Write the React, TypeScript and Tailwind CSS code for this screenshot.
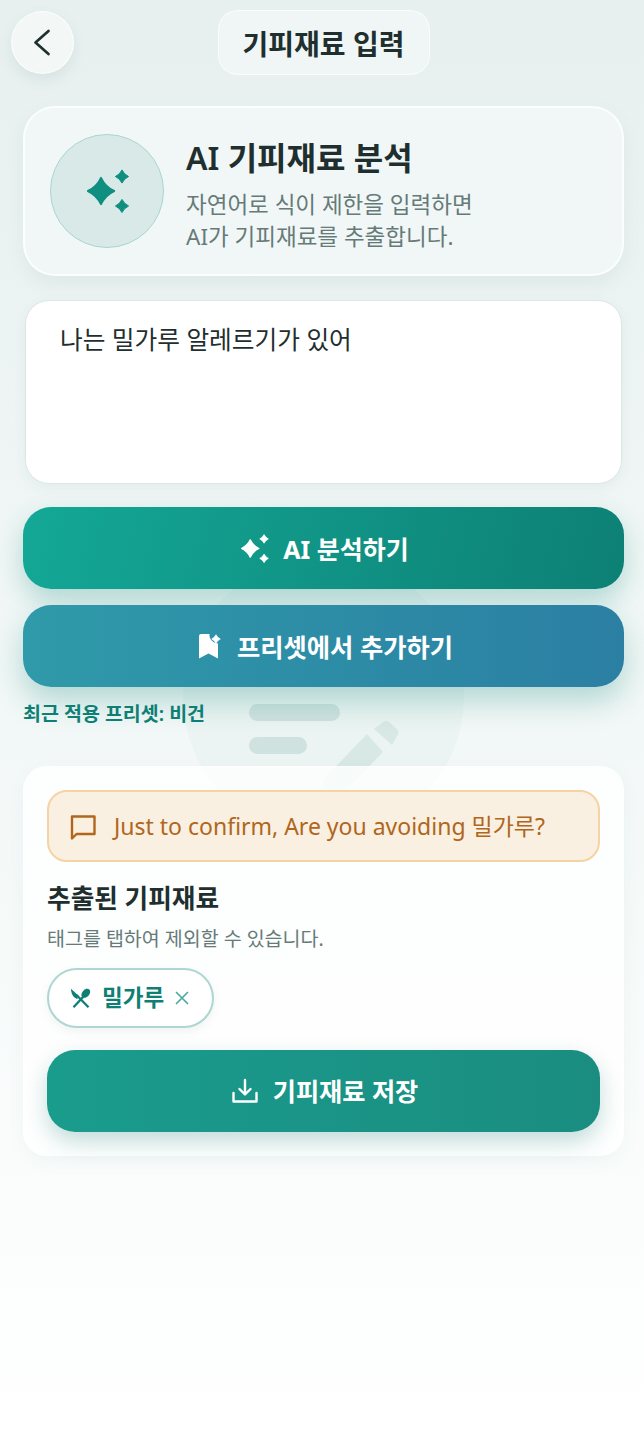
import React from "react";

function Star({ cx, cy, r, fill = "currentColor" }: { cx: number; cy: number; r: number; fill?: string }) {
  const k = r * 0.3;
  return (
    <path
      fill={fill}
      stroke={fill}
      strokeWidth={r * 0.14}
      strokeLinejoin="round"
      d={`M${cx} ${cy - r * 0.94}Q${cx + k} ${cy - k} ${cx + r * 0.94} ${cy}Q${cx + k} ${cy + k} ${cx} ${cy + r * 0.94}Q${cx - k} ${cy + k} ${cx - r * 0.94} ${cy}Q${cx - k} ${cy - k} ${cx} ${cy - r * 0.94}Z`}
    />
  );
}

function Sparkles({ className }: { className?: string }) {
  return (
    <svg viewBox="0 0 44 44" className={className}>
      <Star cx={14} cy={22} r={14} />
      <Star cx={35} cy={7.5} r={7} />
      <Star cx={35} cy={37} r={7} />
    </svg>
  );
}

function BookmarkPlus({ className }: { className?: string }) {
  return (
    <svg viewBox="0 0 22 25" className={className}>
      <path fill="currentColor" d="M0 2Q0 0 2 0H10.500C10 4 12.500 8.500 19 9.500V24.500L9.500 19.500 0 24.500Z" />
      <Star cx={17} cy={5} r={4.600} />
    </svg>
  );
}

function ForkSpoon({ className }: { className?: string }) {
  return (
    <svg viewBox="0 0 22 20" className={className}>
      <ellipse cx="15.800" cy="5.300" rx="3.600" ry="5.200" transform="rotate(42 15.800 5.300)" fill="currentColor" />
      <path stroke="currentColor" strokeWidth="2.300" d="M14 8 3.500 19.200" />
      <path fill="currentColor" d="M1 .8 8.500 7.800 7.200 9.200 8 10 7 11C3.500 9.500 1 6 1 .8Z" />
      <path stroke="currentColor" strokeWidth="2.300" d="M6.500 7 18.500 19.200" />
    </svg>
  );
}

function Backdrop() {
  return (
    <div className="pointer-events-none absolute left-[183px] top-[556px] h-[281px] w-[281px] rounded-full bg-[#dcebe8]/30">
      <div className="absolute left-[66px] top-[148px] h-[17px] w-[91px] rounded-full bg-[#cfe2df]" />
      <div className="absolute left-[66px] top-[181px] h-[17px] w-[58px] rounded-full bg-[#cfe2df]" />
      <svg viewBox="0 0 100 100" className="absolute left-[130px] top-[160px] h-[100px] w-[100px]">
        <path fill="#d8e8e5" d="M54 18 70 36 35 72 12 77 10 64Z" />
        <path fill="#d8e8e5" d="M61 13 70 6a5 5 0 0 1 6 0l8 7a5 5 0 0 1 0 7l-5 9Z" />
      </svg>
    </div>
  );
}

export default function App() {
  return (
    <div
      className="relative h-[1438px] w-[644px] overflow-hidden bg-gradient-to-b from-[#e7f0ef] via-[#f2f8f7] via-50% to-white text-[#1f2f2f]"
      style={{ fontFamily: '"Noto Sans", "Noto Sans CJK KR", sans-serif' }}
    >
      <Backdrop />
      <div className="relative flex flex-col pl-[23px] pr-[20px]">
        <header className="relative flex h-[106px] items-start justify-center pt-[10px]">
          <button className="absolute left-[-12px] top-[11px] flex h-[63px] w-[63px] items-center justify-center rounded-full border border-white/80 bg-[#f3f8f7] shadow-[0_6px_14px_rgba(60,110,105,0.1)]">
            <svg viewBox="0 0 33 33" className="h-[33px] w-[33px] text-[#1f2f2f]" fill="none" stroke="currentColor" strokeWidth="2.700" strokeLinecap="round" strokeLinejoin="round">
              <path d="M22.500 5 L9.500 16.500 L22.500 28" />
            </svg>
          </button>
          <div className="flex h-[65px] w-[212px] items-center justify-center rounded-[20px] border border-white/70 bg-[#eff6f5] pt-[3px] text-[28px] font-semibold leading-none">
            기피재료 입력
          </div>
        </header>

        <section className="flex h-[170px] items-center gap-[22px] rounded-[32px] border-2 border-white/80 bg-[#f1f7f6] pl-[25px] shadow-[0_8px_18px_rgba(60,110,105,0.08)]">
          <div className="flex h-[114px] w-[114px] shrink-0 items-center justify-center rounded-full border border-[#aad5d1] bg-[#d9e9e7] pl-[4px]">
            <Sparkles className="h-[44px] w-[44px] text-[#0e8f80]" />
          </div>
          <div className="pt-[8px]">
            <h1 className="text-[32px] font-semibold leading-[40px]">AI 기피재료 분석</h1>
            <p className="mt-[11px] text-[22.500px] leading-[32px] text-[#667a78]">
              자연어로 식이 제한을 입력하면
              <br />
              AI가 기피재료를 추출합니다.
            </p>
          </div>
        </section>

        <div className="mx-[2px] mt-[24px] h-[184px] rounded-[24px] border border-[#dbe8e6] bg-white px-[34px] pt-[20px] text-[24.700px] leading-[38px] shadow-[0_4px_14px_rgba(60,110,105,0.06)]">
          나는 밀가루 알레르기가 있어
        </div>

        <button className="mt-[23px] flex h-[82px] items-center justify-center gap-[13px] rounded-[28px] bg-[linear-gradient(105deg,#14a897,#0d8074)] pl-[3px] pt-[3px] text-[25px] font-bold text-white shadow-[0_12px_26px_rgba(20,140,125,0.28)]">
          <Sparkles className="mb-[3px] h-[29px] w-[29px]" />
          AI 분석하기
        </button>
        <button className="mt-[16px] flex h-[82px] items-center justify-center gap-[16px] rounded-[28px] bg-gradient-to-r from-[#2f9aa9] to-[#2b7fa3] pl-[5px] pt-[3px] text-[25.300px] font-bold text-white shadow-[0_14px_30px_rgba(30,140,130,0.3)]">
          <BookmarkPlus className="mb-[3px] h-[25px] w-[22px]" />
          프리셋에서 추가하기
        </button>
        <p className="mt-[14px] text-[19.500px] font-semibold leading-[26px] text-[#0d7f74]">최근 적용 프리셋: 비건</p>

        <section className="mt-[39px] flex h-[390px] flex-col rounded-[24px] border border-white/60 bg-white/80 px-[23px] pt-[23px] shadow-[0_6px_18px_rgba(60,110,105,0.05)]">
          <div className="flex h-[72px] items-center gap-[18px] rounded-[20px] border-2 border-[#f5d3a4] bg-[#faf0e2] pl-[21px] pt-[1px] text-[23px] text-[#b0661c]">
            <svg viewBox="0 0 26 26" className="h-[26px] w-[26px] shrink-0" fill="none" stroke="currentColor" strokeWidth="2.400" strokeLinejoin="round">
              <path d="M2 2.500H24.500V20H6.500L2 24.500Z" />
            </svg>
            Just to confirm, Are you avoiding 밀가루?
          </div>
          <h2 className="mt-[20px] text-[25.700px] font-semibold leading-[34px]">추출된 기피재료</h2>
          <p className="mt-[10px] text-[19.500px] leading-[26px] text-[#667a78]">태그를 탭하여 제외할 수 있습니다.</p>
          <div className="mt-[16px] flex h-[60px] w-[167px] items-center gap-[10px] rounded-full border-2 border-[#aed6d2] bg-white pl-[21px] text-[22.500px] font-bold text-[#0d7f74] shadow-[0_4px_10px_rgba(60,110,105,0.07)]">
            <ForkSpoon className="h-[20px] w-[22px] shrink-0" />
            밀가루
            <svg viewBox="0 0 16 16" className="h-[16px] w-[16px] text-[#4fa9a0]" fill="none" stroke="currentColor" strokeWidth="1.700" strokeLinecap="round">
              <path d="M2.500 2.500 13.500 13.500M13.500 2.500 2.500 13.500" />
            </svg>
          </div>
          <button className="mt-[22px] flex h-[82px] items-center justify-center gap-[15px] rounded-[28px] bg-gradient-to-r from-[#1a9c8d] to-[#1a8d80] pl-[3px] pt-[2px] text-[25.200px] font-bold text-white shadow-[0_10px_22px_rgba(20,120,110,0.25)]">
            <svg viewBox="0 0 26 26" className="mb-[2px] h-[26px] w-[26px]" fill="none" stroke="currentColor" strokeWidth="2.400" strokeLinecap="round" strokeLinejoin="round">
              <path d="M13 2V16M7.500 11 13 16.500 18.500 11M1.500 15V23.500H24.500V15" />
            </svg>
            기피재료 저장
          </button>
        </section>
      </div>
    </div>
  );
}
